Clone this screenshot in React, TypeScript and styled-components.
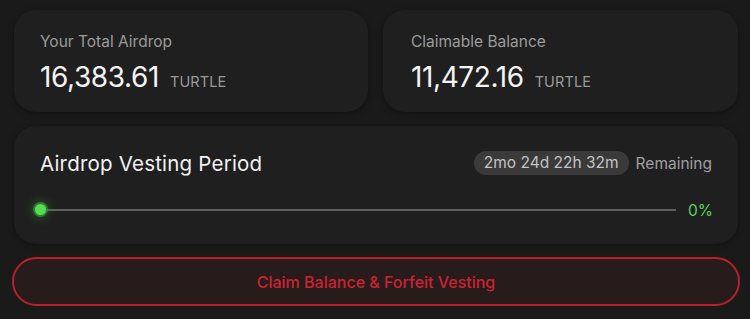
import React from "react";
import styled, { createGlobalStyle } from "styled-components";

const Global = createGlobalStyle`
  html, body { margin: 0; padding: 0; background: #1a1a1a; }
  body { font-family: Inter, "DejaVu Sans", sans-serif; -webkit-font-smoothing: antialiased; }
`;

const Page = styled.div`
  width: 750px;
  height: 319px;
  box-sizing: border-box;
  padding: 10px 10px 0 14px;
  display: flex;
  flex-direction: column;
  background: #1a1a1a;
`;

const StatsRow = styled.div`
  display: grid;
  grid-template-columns: 354px 355px;
  gap: 15px;
`;

const Card = styled.div`
  background: #1f1f1f;
  border-radius: 22px;
  box-shadow: 0 2px 6px rgba(0, 0, 0, 0.35);
`;

const StatCard = styled(Card)<{ $pad: number }>`
  height: 102px;
  box-sizing: border-box;
  padding: 22px 0 0 ${(p) => p.$pad}px;
  display: flex;
  flex-direction: column;
  gap: 9px;
`;

const Label = styled.div`
  font-size: 15.5px;
  line-height: 19px;
  color: #9b9b9b;
`;

const ValueRow = styled.div`
  display: flex;
  align-items: baseline;
  gap: 11px;
`;

const Value = styled.span`
  font-size: 28px;
  line-height: 34px;
  color: #f4f4f4;
  letter-spacing: -0.4px;
`;

const Unit = styled.span`
  font-size: 14.5px;
  color: #9a9a9a;
  letter-spacing: 0.1px;
`;

const VestingCard = styled(Card)`
  margin-top: 14px;
  width: 724px;
  height: 118px;
  box-sizing: border-box;
  padding: 24px 26px 0 26px;
  display: flex;
  flex-direction: column;
  gap: 24px;
`;

const HeaderRow = styled.div`
  display: flex;
  align-items: center;
  justify-content: space-between;
  height: 26px;
`;

const Title = styled.div`
  font-size: 20.5px;
  color: #f2f2f2;
  letter-spacing: 0.2px;
`;

const Remaining = styled.div`
  display: flex;
  align-items: center;
  gap: 7px;
  font-size: 15.5px;
  color: #a0a0a0;
`;

const Pill = styled.span`
  background: #3a3a3a;
  color: #c4c4c4;
  border-radius: 12px;
  height: 24px;
  line-height: 24px;
  padding: 0 10px;
`;

const TrackRow = styled.div`
  display: flex;
  align-items: center;
  gap: 12px;
  height: 20px;
`;

const Track = styled.div`
  position: relative;
  flex: 1;
  height: 2px;
  background: #5e5e5e;
`;

const Dot = styled.span`
  position: absolute;
  left: -5px;
  top: -5px;
  width: 11px;
  height: 11px;
  border-radius: 50%;
  background: #52e04e;
  box-shadow: 0 0 0 2px rgba(60, 150, 60, 0.7), 0 0 10px 4px rgba(70, 200, 70, 0.25);
`;

const Percent = styled.span`
  font-size: 15.5px;
  color: #5fd35c;
  width: 24px;
  text-align: right;
`;

const ClaimButton = styled.button`
  margin: 13px 0 0 -2px;
  width: 728px;
  height: 49px;
  border-radius: 25px;
  border: 2px solid #b8202b;
  background: #281b1c;
  color: #cc2330;
  font-family: Inter, sans-serif;
  font-size: 16px;
  font-weight: 500;
  cursor: pointer;
`;

export default function App() {
  return (
    <>
      <Global />
      <Page>
        <StatsRow>
          <StatCard $pad={26}>
            <Label>Your Total Airdrop</Label>
            <ValueRow>
              <Value>16,383.61</Value>
              <Unit>TURTLE</Unit>
            </ValueRow>
          </StatCard>
          <StatCard $pad={28}>
            <Label>Claimable Balance</Label>
            <ValueRow>
              <Value>11,472.16</Value>
              <Unit>TURTLE</Unit>
            </ValueRow>
          </StatCard>
        </StatsRow>
        <VestingCard>
          <HeaderRow>
            <Title>Airdrop Vesting Period</Title>
            <Remaining>
              <Pill>2mo 24d 22h 32m</Pill>
              <span>Remaining</span>
            </Remaining>
          </HeaderRow>
          <TrackRow>
            <Track>
              <Dot />
            </Track>
            <Percent>0%</Percent>
          </TrackRow>
        </VestingCard>
        <ClaimButton>Claim Balance &amp; Forfeit Vesting</ClaimButton>
      </Page>
    </>
  );
}
